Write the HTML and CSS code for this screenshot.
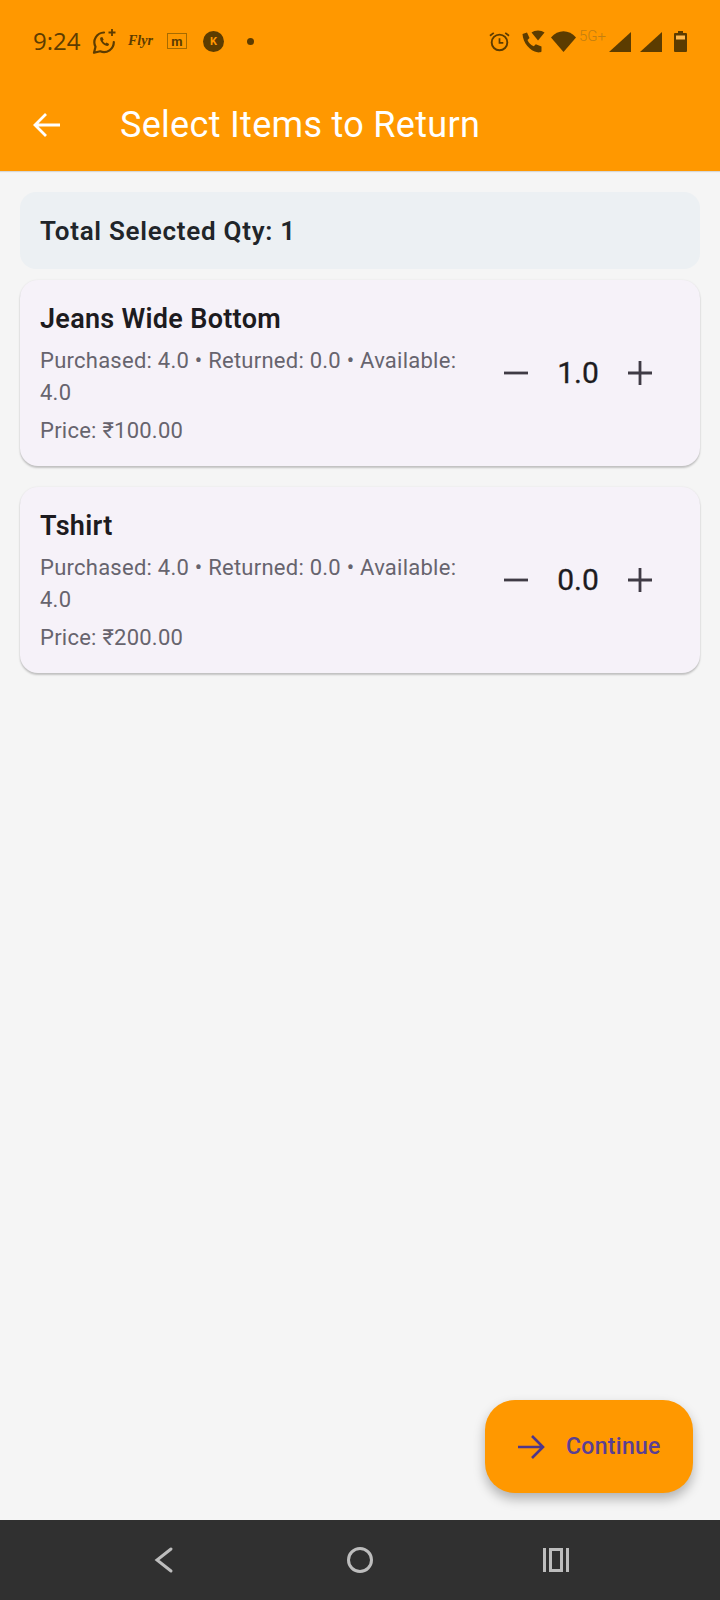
FILE: index.html
```html
<!DOCTYPE html>
<html lang="en">
<head>
<meta charset="utf-8">
<title>Select Items to Return</title>
<link rel="stylesheet" href="styles.css">
</head>
<body>
<div class="screen">
  <header class="top">
    <div class="status">
      <div class="status-left">
        <span class="time">9:24</span>
        <svg class="ic-wa" viewBox="0 0 26 26"><path d="M12 4.500a9.800 9.800 0 0 0-8.500 14.300L2 24.800l6.200-1.500A9.800 9.800 0 0 0 21.800 14" fill="none" stroke="#5c3c00" stroke-width="2.200" stroke-linejoin="round" stroke-linecap="round"/><path d="M8.500 9.500c-1 1 0 4 2 6s5 3 6 2l.6-1.600-2.600-1.400-1 1c-1-.4-2.400-1.800-2.800-2.800l1-1-1.400-2.700z" fill="#5c3c00"/><path d="M20 1v7M16.500 4.500h7" stroke="#5c3c00" stroke-width="1.800" fill="none"/></svg>
        <span class="flyr">Flyr</span>
        <span class="m-wrap"><span class="m-box">m</span></span>
        <span class="k-dot">K</span>
        <span class="dot"></span>
      </div>
      <div class="status-right">
        <svg class="ic-alarm" viewBox="0 0 22 22"><circle cx="11" cy="12" r="8.200" fill="none" stroke="#5c3c00" stroke-width="2"/><path d="M11 7.500V12.500H15" fill="none" stroke="#5c3c00" stroke-width="1.800"/><path d="M1 5l4-3M21 5l-4-3" stroke="#5c3c00" stroke-width="1.800" fill="none"/></svg>
        <svg class="ic-call" viewBox="0 0 23 23"><path d="M.5 4 5 2.500 7.500 8 5.500 10c1 2.800 3.500 5.200 6.300 6.300l2-2 5.700 2.200V21.500c-1 1-3 1-4 .8C8 21 1 13 .5 4z" fill="#5c3c00"/><path d="M9.500 2.500C13-.3 19-.3 22.500 2.500L16 10.500z" fill="#5c3c00"/></svg>
        <svg class="ic-wifi" viewBox="0 0 25 21"><path d="M0 6.500C7-2 18-2 25 6.500L12.500 21z" fill="#5c3c00"/></svg>
        <span class="net">5G+</span>
        <svg class="ic-sig" viewBox="0 0 22 20"><path d="M0 20 22 0v20z" fill="#5c3c00"/></svg>
        <svg class="ic-sig second" viewBox="0 0 22 20"><path d="M0 20 22 0v20z" fill="#5c3c00"/></svg>
        <svg class="ic-batt" viewBox="0 0 13 21"><path d="M4 0h5v2h3a1 1 0 0 1 1 1v17a1 1 0 0 1-1 1H1a1 1 0 0 1-1-1V3a1 1 0 0 1 1-1h3z" fill="#5c3c00"/><rect x="2" y="4.500" width="9" height="4" fill="#ffb84d"/></svg>
      </div>
    </div>
    <div class="appbar">
      <svg class="ic-back" viewBox="0 0 28 26"><path d="M27 13H2M13 2 2 13l11 11" fill="none" stroke="#fff" stroke-width="2.800"/></svg>
      <h1 class="title">Select Items to Return</h1>
    </div>
  </header>

  <main class="content">
    <div class="summary">Total Selected Qty: 1</div>
    <section class="card">
      <div class="info">
        <h2 class="name">Jeans Wide Bottom</h2>
        <p class="meta">Purchased: 4.0 • Returned: 0.0 • Available: 4.0</p>
        <p class="price">Price: ₹100.00</p>
      </div>
      <div class="stepper">
        <svg class="step" viewBox="0 0 24 24"><path d="M0 12h24" stroke="#3f3b45" stroke-width="2.800"/></svg>
        <span class="qty">1.0</span>
        <svg class="step" viewBox="0 0 24 24"><path d="M0 12h24M12 0v24" stroke="#3f3b45" stroke-width="2.800"/></svg>
      </div>
    </section>
    <section class="card">
      <div class="info">
        <h2 class="name">Tshirt</h2>
        <p class="meta">Purchased: 4.0 • Returned: 0.0 • Available: 4.0</p>
        <p class="price">Price: ₹200.00</p>
      </div>
      <div class="stepper">
        <svg class="step" viewBox="0 0 24 24"><path d="M0 12h24" stroke="#3f3b45" stroke-width="2.800"/></svg>
        <span class="qty">0.0</span>
        <svg class="step" viewBox="0 0 24 24"><path d="M0 12h24M12 0v24" stroke="#3f3b45" stroke-width="2.800"/></svg>
      </div>
    </section>
    <button class="fab" type="button">
      <svg class="ic-next" viewBox="0 0 28 26"><path d="M1 13h25M15 2l11 11-11 11" fill="none" stroke="#4f378b" stroke-width="2.600"/></svg>
      <span>Continue</span>
    </button>
  </main>

  <nav class="navbar">
    <svg class="nav-ic" viewBox="0 0 28 28"><path d="M21 3 7 14 21 25" fill="none" stroke="#bdbdbd" stroke-width="3" stroke-linecap="round"/></svg>
    <svg class="nav-ic" viewBox="0 0 28 28"><circle cx="14" cy="14" r="11.500" fill="none" stroke="#bdbdbd" stroke-width="3"/></svg>
    <svg class="nav-ic" viewBox="0 0 28 28"><path d="M2.500 2v24M8.500 3.500h11v21h-11zM25.500 2v24" fill="none" stroke="#bdbdbd" stroke-width="3"/></svg>
  </nav>
</div>
</body>
</html>
```

FILE: styles.css
```css
* { box-sizing: border-box; }
html, body { margin: 0; padding: 0; }
body { font-family: Roboto, "Liberation Sans", sans-serif; background: #f5f5f5; }
.screen { width: 720px; height: 1600px; display: flex; flex-direction: column; overflow: hidden; }

.top { height: 171px; background: #ff9800; flex: none; box-shadow: 0 1px 1px rgba(0,0,0,.12); position: relative; }
.status { height: 80px; padding: 26px 33px 0 33px; display: flex; justify-content: space-between; align-items: flex-start; color: #5c3c00; }
.status-left, .status-right { display: flex; align-items: center; height: 30px; }
.time { font-family: "Open Sans", sans-serif; font-size: 24px; line-height: 28px; color: #5c3c00; width: 59px; }
.ic-wa { width: 26px; height: 26px; }
.flyr { font-family: "Liberation Serif", serif; font-style: italic; font-weight: 700; font-size: 14px; margin-left: 10px; width: 39px; }
.m-wrap { width: 20px; height: 16px; border: 1px solid #a66b00; display: flex; align-items: center; justify-content: center; }
.m-box { font-size: 13px; font-weight: 700; line-height: 1; }
.k-dot { width: 21px; height: 21px; border-radius: 50%; background: #5c3c00; color: #ff9800; font-size: 11px; font-weight: 700; display: flex; align-items: center; justify-content: center; margin-left: 16px; }
.dot { width: 7px; height: 7px; border-radius: 50%; background: #5c3c00; margin-left: 23px; }
.ic-alarm { width: 21px; height: 21px; margin-left: 1px; }
.ic-call { width: 23px; height: 23px; margin-left: 12px; }
.ic-wifi { width: 25px; height: 21px; margin-left: 6px; }
.net { font-size: 15px; font-weight: 300; color: #c47f10; width: 26px; margin-left: 3px; line-height: 1; align-self: flex-start; margin-top: 3px; }
.ic-sig { width: 22px; height: 20px; margin-left: 4px; margin-top: 1px; }
.ic-sig.second { margin-left: 9px; }
.ic-batt { width: 13px; height: 21px; margin-left: 12px; }

.appbar { height: 89px; padding: 0 0 0 33px; display: flex; align-items: center; }
.ic-back { width: 28px; height: 26px; flex: none; }
.title { margin: 0 0 0 59px; font-size: 36px; font-weight: 400; letter-spacing: .3px; color: #fff; white-space: nowrap; line-height: 1; }

.content { flex: 1; position: relative; padding: 21px 20px 0; display: flex; flex-direction: column; }
.summary { height: 77px; border-radius: 16px; background: #ecf0f3; padding: 0 20px; display: flex; align-items: center; font-size: 26px; font-weight: 600; letter-spacing: .73px; color: #212529; margin-bottom: 11px; }
.card { height: 186px; border-radius: 18px; background: #f6f2f9; box-shadow: 0 2px 2px rgba(0,0,0,.2), 0 0 2px rgba(0,0,0,.08); padding: 0 20px; display: flex; align-items: center; margin-bottom: 21px; }
.info { width: 420px; flex: none; padding-top: 4px; }
.name { margin: 0 0 9px; font-size: 27px; font-weight: 600; letter-spacing: .3px; line-height: 33px; color: #1d1b20; }
.meta, .price { margin: 0; font-size: 22px; letter-spacing: .25px; line-height: 32px; color: #67646e; }
.price { margin-top: 6px; }
.stepper { display: flex; align-items: center; margin-left: 44px; }
.step { width: 24px; height: 24px; flex: none; }
.qty { width: 100px; text-align: center; font-size: 30px; font-weight: 400; line-height: 34px; padding-bottom: 1px; color: #1d1b20; -webkit-text-stroke: .3px #1d1b20; }

.fab { position: absolute; left: 485px; top: 1229px; width: 208px; height: 93px; border: 0; border-radius: 30px; background: #ff9800; box-shadow: 0 6px 12px rgba(0,0,0,.28); display: flex; align-items: center; padding: 0 0 0 32px; gap: 21px; color: #5a3f93; font: 500 23px Roboto, sans-serif; letter-spacing: .3px; }
.ic-next { width: 28px; height: 26px; flex: none; }

.navbar { height: 80px; flex: none; background: #303030; display: flex; justify-content: center; align-items: center; gap: 168px; }
.nav-ic { width: 28px; height: 28px; }
```
